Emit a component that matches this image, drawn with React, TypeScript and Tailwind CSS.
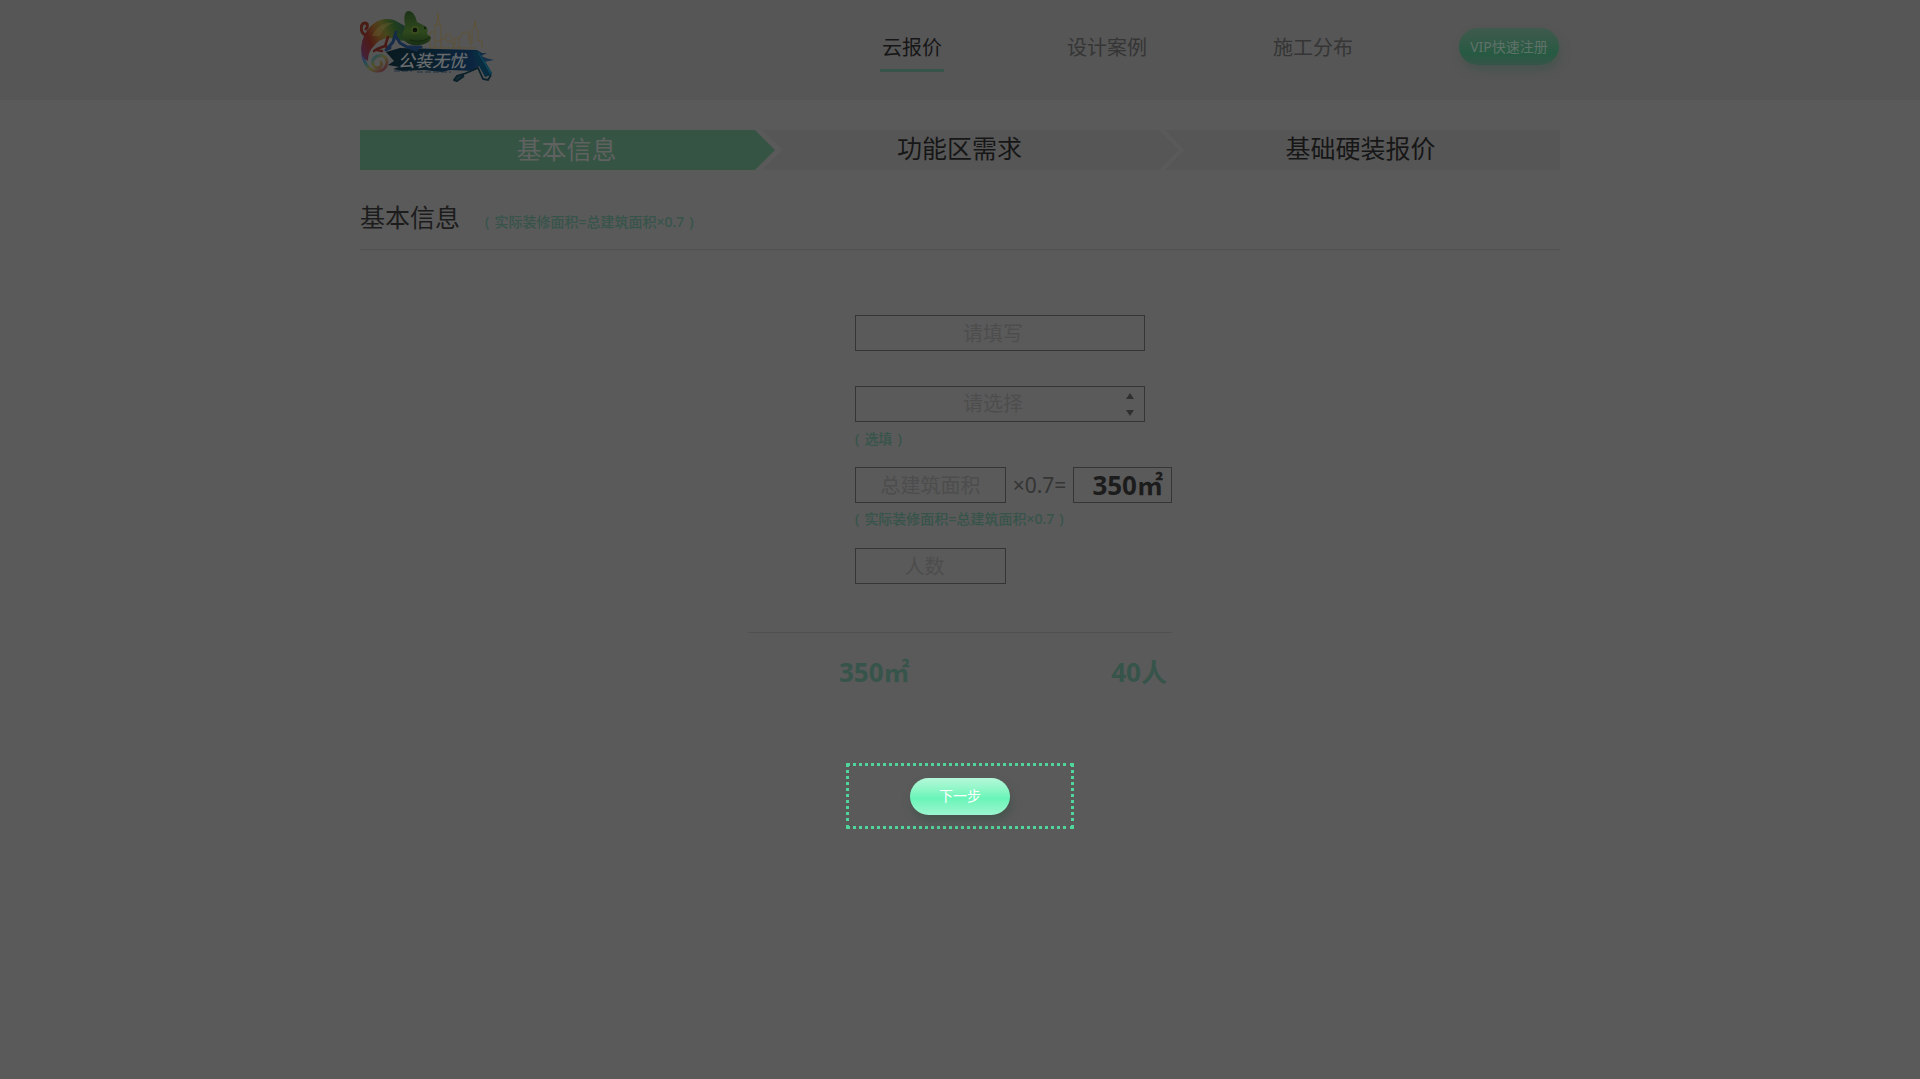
function Logo() {
  return (
    <svg width="136" height="74" viewBox="0 0 136 74" role="img" aria-label="公装无忧">
      <defs>
        <linearGradient id="body" x1="0" y1="0.7" x2="1" y2="0.3">
          <stop offset="0" stopColor="#452034" />
          <stop offset="0.22" stopColor="#4e1b16" />
          <stop offset="0.42" stopColor="#523818" />
          <stop offset="0.58" stopColor="#48461c" />
          <stop offset="0.8" stopColor="#22401b" />
          <stop offset="1" stopColor="#18362a" />
        </linearGradient>
        <linearGradient id="tail" gradientUnits="userSpaceOnUse" x1="2" y1="34" x2="26" y2="62">
          <stop offset="0" stopColor="#4a1d2c" />
          <stop offset="0.25" stopColor="#33305a" />
          <stop offset="0.45" stopColor="#264c5a" />
          <stop offset="0.65" stopColor="#525329" />
          <stop offset="1" stopColor="#502034" />
        </linearGradient>
        <linearGradient id="head" x1="0" y1="0" x2="0" y2="1">
          <stop offset="0" stopColor="#1d3318" />
          <stop offset="0.6" stopColor="#2f491d" />
          <stop offset="1" stopColor="#182e14" />
        </linearGradient>
        <linearGradient id="brush" x1="0" y1="0" x2="1" y2="0">
          <stop offset="0" stopColor="#08191f" />
          <stop offset="0.4" stopColor="#0a202e" />
          <stop offset="0.8" stopColor="#0b2540" />
          <stop offset="1" stopColor="#1b3850" />
        </linearGradient>
      </defs>
      <g fill="none" stroke="#61522a" strokeWidth="0.7">
        <path d="M70 38V22h5v-7l2-2 1-10 1 10 2 2v14h5v-5h4l2 3v7h3v-6h5l2-5 4-1 4 4v8h2V20l2-2 1-7 1 7 2 2v11h4v7" />
        <path d="M70 38h46M75 22v9h6M75 31v7M81 29v9M86 31h5M94 33v5M99 28v10M109 20v11M75 15h6" />
      </g>
      <path d="M26 42L40 38 117 40 122 43 127 43 121 46 126 48 134 50 124 52 127 55 119 56 113 61 90 60 82 62 64 60 42 61 33 59 39 57 28 55 34 51Z" fill="url(#brush)" />
      <path d="M34 61h18M57 62h34" stroke="#152c40" strokeWidth="0.8" strokeDasharray="6 2" />
      <path d="M8 26C-1 24 0 13 5 13c3 0 3 4 1 6" fill="none" stroke="#4a1c16" strokeWidth="3" strokeLinecap="round" />
      <path d="M4 31C1 41 3 51 8 57c6 6 15 5 18-1 3-8-3-12-8-10-6 2-7 8-3 11 4 2 8-1 6-5" fill="none" stroke="url(#tail)" strokeWidth="3" strokeLinecap="round" />
      <path d="M2 33C5 19 15 9 27 9c9 0 13 5 20 8v13c-7 2-11-1-16-2-9 0-13 3-17 8-4 4-6 8-6 15L5 49C1 43 1 38 2 33Z" fill="url(#body)" />
      <path d="M12 26C17 16 24 12 34 13c-7 2-11 6-14 13" fill="#6a5f34" opacity="0.4" />
      <path d="M28 27l-3 9-8 3-3 2M17 40l5 1M26 35l1 4" fill="none" stroke="#481a15" strokeWidth="2.5" strokeLinecap="round" strokeLinejoin="round" />
      <path d="M36 22l-3 10-5 6M35 25l5 8 7 4h14M50 38l7 2M30 38l-4 2" fill="none" stroke="#152b48" strokeWidth="3" strokeLinecap="round" strokeLinejoin="round" />
      <path d="M46 2c4-3 9 1 11 10l8 4c3 1 3 5 2 8l4 3c0 7-12 9-18 8-6-1-10-5-11-9l3-11c-1-5-1-10 1-13Z" fill="url(#head)" />
      <circle cx="55" cy="20" r="4" fill="#3a4d1d" />
      <circle cx="55" cy="20" r="2.3" fill="#0d130b" />
      <circle cx="65" cy="18" r="1" fill="#0d130b" />
      <path d="M50 30c6 2 14 2 20-3" fill="none" stroke="#13250f" />
      <path d="M112 43l4-3 4 3 12 20-1 2-6 2Z" fill="#082c40" />
      <path d="M117 41l3 3 12 19-2 1Z" fill="#104559" />
      <path d="M131 65l-3 5-5-1-5-11-14 6" fill="none" stroke="#0b222c" strokeWidth="1.8" />
      <path d="M104 64l-7 2-3 4 3 1 7-5" fill="#1c2e34" stroke="#0a202a" strokeWidth="2" strokeLinejoin="round" />
      <text x="38" y="57" fill="#666a6c" className="font-['Noto_Sans_CJK_SC',sans-serif] text-[17px] font-medium italic">公装无忧</text>
    </svg>
  );
}

function Hint({ text }: { text: string }) {
  return (
    <p className="flex gap-[5px] text-sm leading-5 font-medium text-[#36544a]">
      <span>(</span>
      <span>{text}</span>
      <span>)</span>
    </p>
  );
}

const field =
  "h-9 border border-[#353535] bg-transparent text-center text-xl text-[#4d4d4d] outline-none placeholder:text-[#4d4d4d] placeholder:opacity-100";

export default function App() {
  return (
    <div className="min-h-screen bg-[#5a5a5a] font-['Noto_Sans','Noto_Sans_CJK_SC',sans-serif] text-[#1c1c1c]">
      <header className="bg-[#565656]">
        <div className="mx-auto flex h-[100px] max-w-[1200px] items-start justify-between">
          <a href="#home" className="pt-[10px]">
            <Logo />
          </a>
          <div className="flex items-start pr-px">
            <nav className="flex pt-8 text-xl leading-8 text-[#353535]">
              <a href="#quote" className="mr-[123px] border-b-3 border-[#36544a] px-0.5 pb-[5px] text-[#161616]">云报价</a>
              <a href="#cases" className="mr-[126px]">设计案例</a>
              <a href="#map" className="mr-[106px]">施工分布</a>
            </nav>
            <button className="mt-7 h-[37px] w-[100px] rounded-full bg-linear-to-b from-[#3f5a4e] via-[#265a42] via-70% to-[#36544a] text-sm whitespace-nowrap text-[#5f7269] shadow-[2px_6px_8px_#48544e]">
              VIP快速注册
            </button>
          </div>
        </div>
      </header>

      <main className="mx-auto max-w-[1200px] pt-[30px]">
        <ol className="flex h-10 text-[25px] leading-9 text-[#161616]">
          <li className="z-10 w-[415px] bg-[#365444] pr-[76px] text-center leading-[38px] text-[#5f6260] [clip-path:polygon(0_0,395px_0,100%_50%,395px_100%,0_100%)]">
            <span className="pl-[74px]">基本信息</span>
          </li>
          <li className="-ml-[13px] w-[417px] bg-[#565656] pr-[22px] text-center [clip-path:polygon(0_0,397px_0,100%_50%,397px_100%,0_100%,21px_50%)]">
            功能区需求
          </li>
          <li className="-ml-[14px] flex-1 bg-[#565656] pr-1 text-center [clip-path:polygon(0_0,100%_0,100%_100%,0_100%,19px_50%)]">
            基础硬装报价
          </li>
        </ol>

        <div className="flex h-20 items-end border-b border-[#505050] pb-3">
          <h1 className="mr-[25px] text-[25px] leading-10">基本信息</h1>
          <div className="pb-[5px]"><Hint text="实际装修面积=总建筑面积×0.7" /></div>
        </div>

        <form className="mx-auto w-[424px] pt-[65px]">
          <div className="pl-[107px]">
            <input aria-label="名称" placeholder="请填写" className={`${field} block w-[290px] pr-3.5`} />
            <div className="relative mt-[35px] w-[290px]">
              <select aria-label="类型" className={`${field} block w-full appearance-none pr-3.5`}>
                <option>请选择</option>
              </select>
              <svg className="pointer-events-none absolute top-[7px] right-[11px]" width="8" height="24" viewBox="0 0 8 24" fill="#303030">
                <path d="M4 0l4 6H0zM4 23l4-6H0z" />
              </svg>
            </div>
            <div className="pt-[7px]"><Hint text="选填" /></div>
            <div className="mt-[18px] flex items-center justify-between">
              <input aria-label="总建筑面积" placeholder="总建筑面积" className={`${field} w-[151px]`} />
              <span className="text-[21px] leading-9 text-[#353535]">×0.7=</span>
              <output className="h-9 w-[99px] border border-[#353535] pr-2 text-right text-[26px] leading-[34px] font-bold">350㎡</output>
            </div>
            <div className="pt-[6px]"><Hint text="实际装修面积=总建筑面积×0.7" /></div>
            <input aria-label="人数" placeholder="人数" className={`${field} mt-[19px] block w-[151px] pr-3`} />
          </div>
          <div className="mt-12 flex justify-between border-t border-[#505050] pt-[19px] pr-[5px] pl-[91px] text-[26px] leading-10 font-bold text-[#36544a]">
            <span>350㎡</span>
            <span>40人</span>
          </div>
        </form>

        <div className="mx-auto mt-[71px] flex h-[66px] w-[228px] items-center justify-center border-3 border-dotted border-[#50d69c]">
          <button className="h-[37px] w-[100px] rounded-full bg-linear-to-b from-[#b4f8da] via-[#68f5b8] via-55% to-[#9bf5cf] text-sm text-white shadow-[2px_6px_8px_#48544e]">
            下一步
          </button>
        </div>
      </main>
    </div>
  );
}
